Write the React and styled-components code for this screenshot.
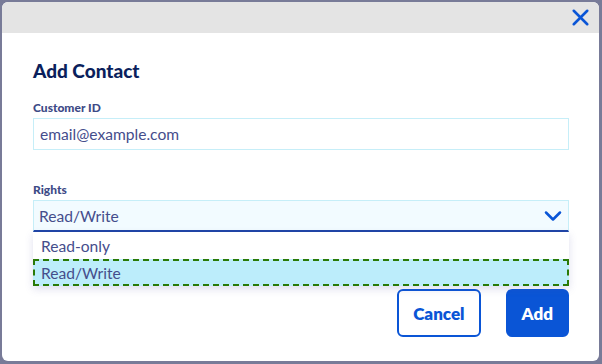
import React from "react";
import styled, { createGlobalStyle } from "styled-components";
import { X, ChevronDown } from "lucide-react";

const GlobalStyle = createGlobalStyle`
  html, body {
    margin: 0;
    padding: 0;
    background: #787b98;
    font-family: Lato, "Open Sans", sans-serif;
  }
`;

export default function App() {
  const options = ["Read-only", "Read/Write"];
  const selected = "Read/Write";

  return (
    <>
      <GlobalStyle />
      <Modal>
        <Header>
          <CloseButton aria-label="Close">
            <X size={27} strokeWidth={2.3} />
          </CloseButton>
        </Header>
        <Body>
          <Title>Add Contact</Title>
          <Label>Customer ID</Label>
          <Input defaultValue="email@example.com" />
          <Spacer />
          <Label>Rights</Label>
          <SelectWrap>
            <Select>
              <span>{selected}</span>
              <ChevronDown size={28} strokeWidth={2.2} color="#0a55d6" />
            </Select>
            <Menu>
              {options.map((opt) => (
                <Option key={opt} active={opt === selected}>
                  {opt}
                </Option>
              ))}
            </Menu>
          </SelectWrap>
          <Actions>
            <Button>Cancel</Button>
            <Button primary>Add</Button>
          </Actions>
        </Body>
      </Modal>
    </>
  );
}

const Modal = styled.div`
  margin: 2px 3px 0 2px;
  height: 359px;
  background: #ffffff;
  border-radius: 6px;
  overflow: hidden;
  display: flex;
  flex-direction: column;
`;

const Header = styled.div`
  height: 31px;
  background: #e4e4e4;
  display: flex;
  align-items: center;
  justify-content: flex-end;
  padding-right: 5px;
`;

const CloseButton = styled.button`
  border: none;
  background: none;
  padding: 0;
  color: #0a55d6;
  display: flex;
  cursor: pointer;
`;

const Body = styled.div`
  padding: 26px 30px 0 31px;
  display: flex;
  flex-direction: column;
`;

const Title = styled.h1`
  margin: 0 0 17px;
  font-size: 19px;
  line-height: 24px;
  font-weight: 900;
  color: #0b1f5c;
`;

const Label = styled.label`
  font-size: 12px;
  line-height: 15px;
  font-weight: 900;
  color: #3d4a86;
  margin-bottom: 3px;
`;

const Input = styled.input`
  box-sizing: border-box;
  height: 32px;
  border: 1px solid #c6eef8;
  background: #ffffff;
  padding: 0 6px;
  font-family: inherit;
  font-size: 15.6px;
  color: #454d8c;
  outline: none;
`;

const Spacer = styled.div`
  height: 32px;
`;

const SelectWrap = styled.div`
  position: relative;
`;

const Select = styled.div`
  box-sizing: border-box;
  height: 32px;
  background: #f2fbff;
  border: 1px solid #c6eef8;
  border-bottom: 2px solid #1f45a6;
  display: flex;
  align-items: center;
  justify-content: space-between;
  padding: 0 1px 0 5px;
  font-size: 15.6px;
  color: #454d8c;
`;

const Menu = styled.div`
  position: absolute;
  top: 32px;
  left: 0;
  right: 0;
  background: #ffffff;
  box-shadow: 0 3px 8px rgba(80, 80, 160, 0.18);
  z-index: 2;
`;

const Option = styled.div`
  box-sizing: border-box;
  height: 27px;
  display: flex;
  align-items: center;
  padding-left: ${(p) => (p.active ? "6px" : "8px")};
  font-size: 15.6px;
  color: #454d8c;
  background: ${(p) => (p.active ? "#bcedfb" : "#ffffff")};
  border: ${(p) => (p.active ? "2px dashed #2a7a06" : "none")};
`;

const Actions = styled.div`
  margin-top: 57px;
  display: flex;
  justify-content: flex-end;
  gap: 25px;
`;

const Button = styled.button`
  box-sizing: border-box;
  height: 48px;
  padding: 0 14px;
  border-radius: 6px;
  border: 2px solid #0a55d6;
  background: ${(p) => (p.primary ? "#0a55d6" : "#ffffff")};
  color: ${(p) => (p.primary ? "#ffffff" : "#0a55d6")};
  font-family: inherit;
  font-size: 17px;
  font-weight: 800;
  cursor: pointer;
`;
